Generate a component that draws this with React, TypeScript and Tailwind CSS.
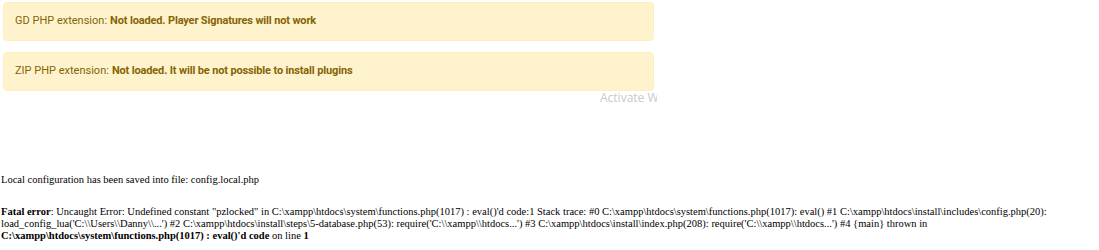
const alerts = [
  {
    label: "GD PHP extension:",
    status: "Not loaded. Player Signatures will not work",
  },
  {
    label: "ZIP PHP extension:",
    status: "Not loaded. It will be not possible to install plugins",
  },
];

export default function App() {
  return (
    <div className="w-[1099px] h-[250px] overflow-hidden bg-white">
      <div className="relative w-[658px] pl-[3px] pt-[2px]">
        <div className="flex flex-col gap-[11px]">
          {alerts.map((a) => (
            <div
              key={a.label}
              className="h-[39px] w-[651px] rounded-[4px] bg-[#fff3cd] border border-[#ffeeba] px-[11px] flex items-center text-[11px] text-[#856404] font-['Roboto',sans-serif]"
            >
              <span className="mr-[3px]">{a.label}</span>
              <b className="font-bold tracking-[-0.15px]">{a.status}</b>
            </div>
          ))}
        </div>
        <div className="h-[170px] overflow-hidden">
          <span className="absolute left-[600px] top-[89px] w-[57px] overflow-hidden whitespace-nowrap text-[12px] text-[#c9c9c9] font-['Open_Sans',sans-serif]">
            Activate Windows
          </span>
        </div>
      </div>

      <div className="font-['Liberation_Serif',serif] text-[10.5px] leading-[12px] text-black pl-[1px] pr-[30px] -mt-[87px]">
        <p>Local configuration has been saved into file: config.local.php</p>
        <p className="mt-[20px]">
          <b>Fatal error</b>: Uncaught Error: Undefined constant "pzlocked" in
          C:\xampp\htdocs\system\functions.php(1017) : eval()'d code:1 Stack
          trace: #0 C:\xampp\htdocs\system\functions.php(1017): eval() #1
          C:\xampp\htdocs\install\includes\config.php(20):
          load_config_lua('C:\\Users\\Danny\\...') #2
          C:\xampp\htdocs\install\steps\5-database.php(53):
          require('C:\\xampp\\htdocs...') #3
          C:\xampp\htdocs\install\index.php(208):
          require('C:\\xampp\\htdocs...') #4 {"{main}"} thrown in{" "}
          <b>C:\xampp\htdocs\system\functions.php(1017) : eval()'d code</b> on
          line <b>1</b>
        </p>
      </div>
    </div>
  );
}
